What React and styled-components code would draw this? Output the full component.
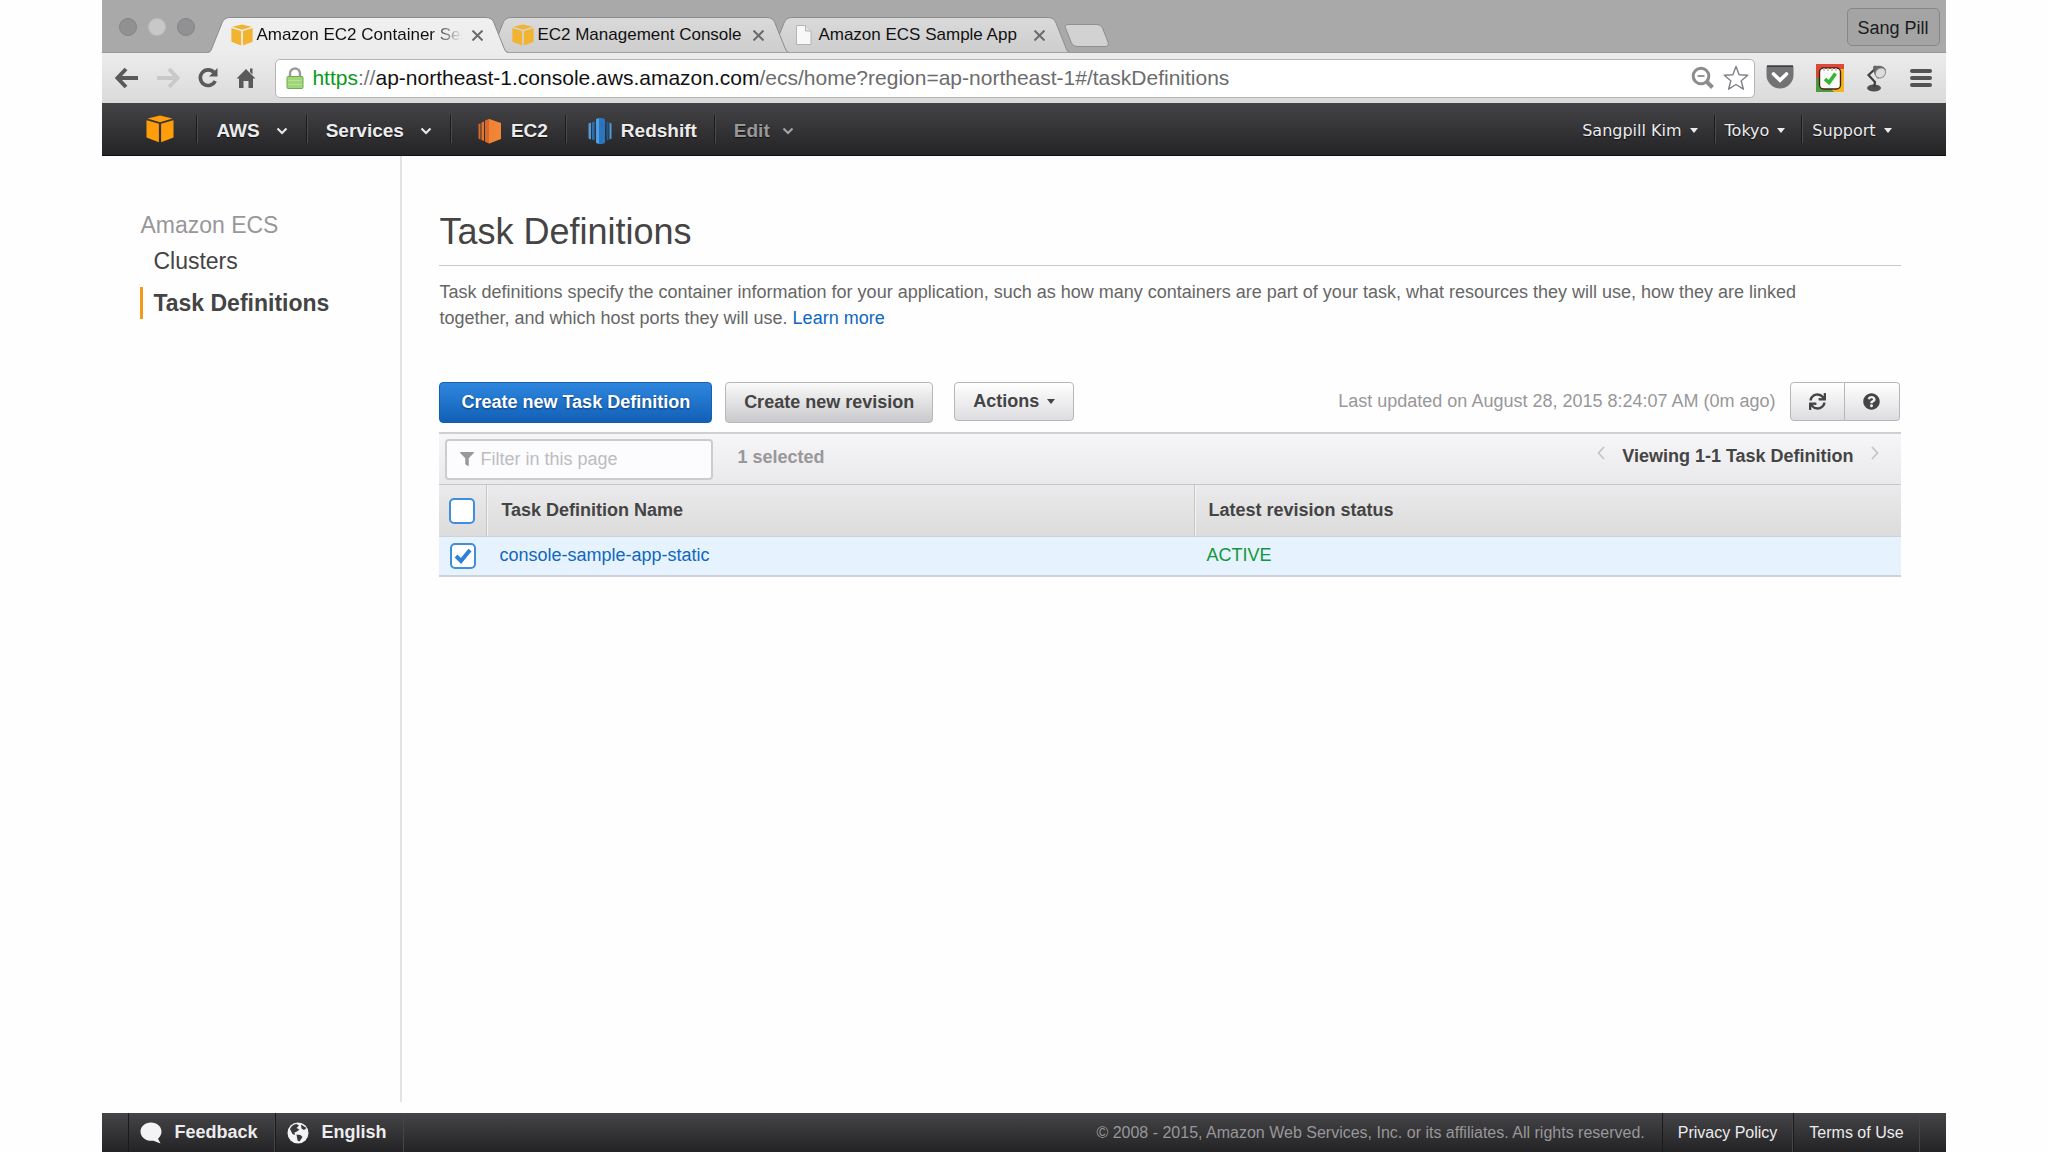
import React, { useState } from 'react';
import styled, { createGlobalStyle } from 'styled-components';
import { FaFilter, FaSync, FaQuestionCircle } from 'react-icons/fa';

const TABS = [
  { title: 'Amazon EC2 Container Ser', icon: 'cube', active: true },
  { title: 'EC2 Management Console', icon: 'cube' },
  { title: 'Amazon ECS Sample App', icon: 'page' },
];

const TASKS = [{ name: 'console-sample-app-static', status: 'ACTIVE' }];

const CubeIcon = ({ size, color }) => (
  <svg width={size} height={size} viewBox='0 0 28 28' fill={color}>
    <path d='M14 0.5 26.5 3.6 14 7.2 1.5 3.6Z' />
    <path d='M0.5 5.2 12.9 8.8V27.3L0.5 22.6Z' />
    <path d='M27.5 5.2 15.1 8.8V27.3L27.5 22.6Z' />
  </svg>
);

const PageIcon = () => (
  <svg width='22' height='22' viewBox='0 0 22 22'>
    <path d='M3.5 1.5H12.5L18 7V20.5H3.5Z' fill='#f8f8f8' stroke='#b4b4b4' />
    <path d='M12.5 1.5V7H18' fill='#e4e4e4' stroke='#b4b4b4' />
  </svg>
);

const CloseIcon = () => (
  <svg width='11' height='11' viewBox='0 0 10 10'>
    <path d='M0.5 0.5 9.5 9.5M9.5 0.5 0.5 9.5' stroke='#6b6b6b' strokeWidth='1.800' />
  </svg>
);

const TabShape = ({ active }) => (
  <svg width='100%' height='36' viewBox='0 0 300 36' preserveAspectRatio='none'>
    <defs>
      <linearGradient id={active ? 'tabOn' : 'tabOff'} x2='0' y2='1'>
        <stop offset='0' stopColor={active ? '#f0f0f0' : '#dadada'} />
        <stop offset='1' stopColor={active ? '#ececec' : '#cdcdcd'} />
      </linearGradient>
    </defs>
    <path
      d='M0 36Q3 35 4 31L14 6Q16 0.5 22 0.5H278Q284 0.5 286 6L296 31Q297 35 300 36Z'
      fill={`url(#${active ? 'tabOn' : 'tabOff'})`}
    />
    <path
      d='M0 35.5Q3 35 4 31L14 6Q16 0.5 22 0.5H278Q284 0.5 286 6L296 31Q297 35 300 35.5'
      fill='none'
      stroke='#8c8c8c'
    />
    {!active && <path d='M0 35.5H300' stroke='#a0a0a0' />}
  </svg>
);

const NewTabShape = () => (
  <svg width='46' height='26' viewBox='0 0 46 26'>
    <path
      d='M4 1.5H33Q37 1.5 38.500 5L44 19Q45.500 23.500 41 23.500H13Q9 23.500 7.500 20L1.500 5Q0.500 1.500 4 1.500Z'
      fill='#d2d2d2'
      stroke='#8e8e8e'
    />
  </svg>
);

const BackIcon = () => (
  <svg width='24' height='22' viewBox='0 0 24 22' fill='none' stroke='#5a5a5a'>
    <path d='M11 2 2.500 11 11 20M3 11H23' strokeWidth='4' />
  </svg>
);

const ForwardIcon = () => (
  <svg width='24' height='22' viewBox='0 0 24 22' fill='none' stroke='#c9c9c9'>
    <path d='M13 2 21.500 11 13 20M21 11H1' strokeWidth='4' />
  </svg>
);

const ReloadIcon = () => (
  <svg width='22' height='22' viewBox='0 0 22 22'>
    <path d='M17 5.500A7.800 7.800 0 1 0 18.200 14' fill='none' stroke='#5a5a5a' strokeWidth='3.600' />
    <path d='M20.500 1V9.500H12Z' fill='#5a5a5a' />
  </svg>
);

const HomeIcon = () => (
  <svg width='20' height='20' viewBox='0 0 20 20' fill='#5a5a5a'>
    <path d='M10 1 19.500 10.500H17V20H12.500V13H7.500V20H3V10.500H0.500Z' />
    <path d='M14 0.500H16.500V6.500L14 4Z' />
  </svg>
);

const LockIcon = () => (
  <svg width='18' height='22' viewBox='0 0 18 22'>
    <path d='M4 11V6.500A5 5 0 0 1 14 6.500V11' fill='none' stroke='#9a9a9a' strokeWidth='2.400' />
    <rect x='1' y='9.500' width='16' height='12' rx='1' fill='#9fd67a' stroke='#6fac4c' />
    <path d='M2 13.500H16M2 17.500H16' stroke='#b4e295' />
  </svg>
);

const ZoomOutIcon = () => (
  <svg width='24' height='24' viewBox='0 0 24 24' fill='none' stroke='#8c8c8f'>
    <circle cx='10' cy='10' r='7.800' strokeWidth='3' />
    <path d='M6.500 10H13.500' strokeWidth='1.800' />
    <path d='M15.500 15.500 21.500 21.500' strokeWidth='4' />
  </svg>
);

const StarIcon = () => (
  <svg width='26' height='26' viewBox='0 0 26 26'>
    <path
      d='M13 1.500 16.200 9.800 24.800 10.300 18.200 15.700 20.400 24.200 13 19.500 5.600 24.200 7.800 15.700 1.200 10.300 9.800 9.800Z'
      fill='#fff'
      stroke='#7f7f86'
      strokeWidth='1.400'
      strokeLinejoin='round'
    />
  </svg>
);

const PocketIcon = () => (
  <svg width='28' height='26' viewBox='0 0 28 26'>
    <path d='M2 0.500H26Q27.500 0.500 27.500 2V10A13.500 13.500 0 0 1 0.500 10V2Q0.500 0.500 2 0.500Z' fill='#737376' />
    <path d='M1 1.200H27' stroke='#3e3e40' strokeWidth='1.600' />
    <path d='M7.500 9 14 15.300 20.500 9' fill='none' stroke='#fff' strokeWidth='3.600' strokeLinecap='round' />
  </svg>
);

const CheckerIcon = () => (
  <svg width='28' height='28' viewBox='0 0 28 28'>
    <path d='M0 0H28V9H0Z' fill='#dd4a3c' />
    <path d='M20 5H28V28H17Z' fill='#f3b51c' />
    <path d='M0 10 3 10 18 28H0Z' fill='#4d9a45' />
    <path d='M0 4H4V14H0Z' fill='#d24a38' />
    <rect x='3.500' y='4' width='21' height='21' rx='4' fill='#f9fbf7' stroke='#4a1f12' strokeWidth='1.400' />
    <path d='M8 4V7M12 4V7M16 4V7M20 4V7' stroke='#bbb' strokeWidth='1.500' />
    <path d='M9 15 13 18.500 19.500 9.500' fill='none' stroke='#33b535' strokeWidth='3.600' />
  </svg>
);

const LampIcon = () => (
  <svg width='22' height='28' viewBox='0 0 22 28'>
    <ellipse cx='8' cy='24' rx='7' ry='3.500' fill='#505050' />
    <path d='M8 23 9 18 2.500 11 9 5' fill='none' stroke='#3e3e3e' strokeWidth='2.200' />
    <path d='M7 3Q8 0.500 11 2Q17 1 20 6L12 15Q7 10 7 3Z' fill='#666' />
    <ellipse cx='14.500' cy='9' rx='5.500' ry='4.600' transform='rotate(-40 14.500 9)' fill='#dcdcdc' stroke='#8d8d8d' />
  </svg>
);

const MenuIcon = () => (
  <svg width='22' height='20' viewBox='0 0 22 20'>
    <path d='M2 3H20M2 10H20M2 17H20' stroke='#535355' strokeWidth='4' strokeLinecap='round' />
  </svg>
);

const Ec2Icon = () => (
  <svg width='24' height='26' viewBox='0 0 24 26'>
    <path d='M11 1 23 5V21L11 25.500Z' fill='#f58536' />
    <path d='M11 1 17 3.500V23L11 25.500Z' fill='#f08434' />
    <path d='M7 2.500 11 1V25.500L7 23.800Z' fill='#d9682a' />
    <path d='M3.500 4.500 6 3.600V22.900L3.500 22Z' fill='#e27631' />
    <path d='M0.500 6 2.500 5.200V21.500L0.500 20.700Z' fill='#d9682a' />
  </svg>
);

const RedshiftIcon = () => (
  <svg width='24' height='28' viewBox='0 0 24 28'>
    <path d='M0.500 6.500 3 5.500V22.500L0.500 21.500Z' fill='#4d9ade' />
    <path d='M4 5.500 6.500 4.500V23.500L4 22.500Z' fill='#2a70b4' />
    <path d='M8 2 11 1V27L8 26Z' fill='#4f9fe0' />
    <path d='M11 1H14L17 2V26L14 27H11Z' fill='#2b74be' />
    <path d='M18.500 4.500 20.500 5V23L18.500 23.500Z' fill='#21598f' />
    <path d='M21.500 5.500 23.500 6.500V21.500L21.500 22.500Z' fill='#4d9ade' />
  </svg>
);

const ChevronIcon = ({ color }) => (
  <svg width='12' height='8' viewBox='0 0 12 8'>
    <path d='M1.500 1.500 6 6 10.500 1.500' fill='none' stroke={color} strokeWidth='2.200' />
  </svg>
);

const SmallCaret = () => (
  <svg width='8' height='5' viewBox='0 0 8 5'>
    <path d='M0 0H8L4 5Z' fill='currentColor' />
  </svg>
);

const BubbleIcon = () => (
  <svg width='22' height='22' viewBox='0 0 22 22'>
    <path d='M11 0.500C17 0.500 21.500 4.500 21.500 9.500C21.500 12.500 20 15 18 16.700L20.500 21.500L13.500 18.800C5.500 19.500 0.500 15 0.500 9.500C0.500 4.500 5 0.500 11 0.500Z' fill='#f3f3f5' />
  </svg>
);

const GlobeIcon = () => (
  <svg width='22' height='22' viewBox='0 0 22 22'>
    <circle cx='11' cy='11' r='10.500' fill='#f3f3f5' />
    <path d='M3 7Q5 2.500 9.500 2L12 3.500 9.500 6 12.500 7.500 10 9.500 7.500 10.500 8 13 5.500 12Z' fill='#39383a' />
    <path d='M14 2.500 19.500 6 17 8 14.500 6.500Z' fill='#39383a' />
    <path d='M9.500 12.500 13.500 13 15.500 15 12.500 19.500 10.500 18.500Z' fill='#39383a' />
  </svg>
);

const PageArrow = ({ back }) => (
  <svg width='8' height='14' viewBox='0 0 8 14'>
    <path
      d={back ? 'M7 1 1.500 7 7 13' : 'M1 1 6.500 7 1 13'}
      fill='none'
      stroke='#c2c1c4'
      strokeWidth='1.600'
    />
  </svg>
);

const BrowserBar = () => (
  <header>
    <TitleBar>
      <Lights>
        <Light />
        <Light $pale />
        <Light />
      </Lights>
      <TabStrip>
        {TABS.map((tab, i) => (
          <Tab key={tab.title} $order={TABS.length - i}>
            <TabBackdrop>
              <TabShape active={tab.active} />
            </TabBackdrop>
            {tab.icon === 'cube' ? <CubeIcon size={22} color='#f2b330' /> : <PageIcon />}
            <TabTitle $fade={tab.active}>{tab.title}</TabTitle>
            <PlainButton aria-label='Close tab'>
              <CloseIcon />
            </PlainButton>
          </Tab>
        ))}
        <NewTab aria-label='New tab'>
          <NewTabShape />
        </NewTab>
      </TabStrip>
      <Profile>Sang Pill</Profile>
    </TitleBar>
    <Toolbar>
      <NavButtons>
        <PlainButton aria-label='Back'>
          <BackIcon />
        </PlainButton>
        <PlainButton aria-label='Forward'>
          <ForwardIcon />
        </PlainButton>
        <PlainButton aria-label='Reload'>
          <ReloadIcon />
        </PlainButton>
        <PlainButton aria-label='Home'>
          <HomeIcon />
        </PlainButton>
      </NavButtons>
      <AddressBar>
        <LockIcon />
        <Url role='textbox' aria-label='Address'>
          <UrlPart $color='#0a9a1e'>https</UrlPart>
          <UrlPart $color='#777'>://</UrlPart>
          <UrlPart $color='#111'>ap-northeast-1.console.aws.amazon.com</UrlPart>
          <UrlPart $color='#6c6c6c'>/ecs/home?region=ap-northeast-1#/taskDefinitions</UrlPart>
        </Url>
        <PlainButton aria-label='Zoom'>
          <ZoomOutIcon />
        </PlainButton>
        <PlainButton aria-label='Bookmark'>
          <StarIcon />
        </PlainButton>
      </AddressBar>
      <Extensions>
        <PlainButton aria-label='Pocket'>
          <PocketIcon />
        </PlainButton>
        <PlainButton aria-label='Checker'>
          <CheckerIcon />
        </PlainButton>
        <PlainButton aria-label='Lamp'>
          <LampIcon />
        </PlainButton>
        <PlainButton aria-label='Menu'>
          <MenuIcon />
        </PlainButton>
      </Extensions>
    </Toolbar>
  </header>
);

const ConsoleNav = () => (
  <NavBar>
    <NavGroup>
      <NavLogo href='#' aria-label='Home'>
        <CubeIcon size={28} color='#ff9d0b' />
      </NavLogo>
      <NavItem>
        AWS <ChevronIcon color='#e6e6e8' />
      </NavItem>
      <NavItem>
        Services <ChevronIcon color='#e6e6e8' />
      </NavItem>
      <ShortcutItem $first>
        <Ec2Icon /> EC2
      </ShortcutItem>
      <ShortcutItem>
        <RedshiftIcon /> Redshift
      </ShortcutItem>
      <NavItem $muted>
        Edit <ChevronIcon color='#a3a3a6' />
      </NavItem>
    </NavGroup>
    <NavGroup>
      {['Sangpill Kim', 'Tokyo', 'Support'].map((label) => (
        <AccountItem key={label}>
          {label} <SmallCaret />
        </AccountItem>
      ))}
    </NavGroup>
  </NavBar>
);

const TaskTable = () => {
  const [selected, setSelected] = useState([TASKS[0].name]);
  const toggle = (name) =>
    setSelected(selected.includes(name) ? selected.filter((n) => n !== name) : [...selected, name]);
  return (
    <>
      <FilterBar>
        <FilterLabel>
          <FaFilter />
          <FilterInput placeholder='Filter in this page' aria-label='Filter in this page' />
        </FilterLabel>
        <SelectedCount>{selected.length} selected</SelectedCount>
        <Pager>
          <PlainButton aria-label='Previous page'>
            <PageArrow back />
          </PlainButton>
          <PagerText>Viewing 1-1 Task Definition</PagerText>
          <PlainButton aria-label='Next page'>
            <PageArrow />
          </PlainButton>
        </Pager>
      </FilterBar>
      <Table>
        <thead>
          <tr>
            <Th $check>
              <Checkbox aria-label='Select all' />
            </Th>
            <Th>Task Definition Name</Th>
            <Th>Latest revision status</Th>
          </tr>
        </thead>
        <tbody>
          {TASKS.map(({ name, status }) => (
            <tr key={name}>
              <Td $check>
                <Checkbox
                  aria-label={name}
                  checked={selected.includes(name)}
                  onChange={() => toggle(name)}
                />
              </Td>
              <Td>
                <Link href='#'>{name}</Link>
              </Td>
              <Td>
                <Status>{status}</Status>
              </Td>
            </tr>
          ))}
        </tbody>
      </Table>
    </>
  );
};

export default function App() {
  return (
    <>
      <GlobalStyle />
      <Window>
        <BrowserBar />
        <ConsoleNav />
        <Body>
          <Sidebar>
            <SideTitle>Amazon ECS</SideTitle>
            <SideLink href='#'>Clusters</SideLink>
            <SideLink href='#' $active>
              Task Definitions
            </SideLink>
          </Sidebar>
          <Main>
            <Heading>Task Definitions</Heading>
            <Intro>
              Task definitions specify the container information for your application, such as how many
              containers are part of your task, what resources they will use, how they are linked together,
              and which host ports they will use. <Link href='#'>Learn more</Link>
            </Intro>
            <Actions>
              <Button $primary>Create new Task Definition</Button>
              <Button $shaded>Create new revision</Button>
              <MenuButton>
                Actions <SmallCaret />
              </MenuButton>
              <Updated>Last updated on August 28, 2015 8:24:07 AM (0m ago)</Updated>
              <ButtonPair>
                <IconButton aria-label='Refresh'>
                  <FaSync />
                </IconButton>
                <IconButton aria-label='Help'>
                  <FaQuestionCircle />
                </IconButton>
              </ButtonPair>
            </Actions>
            <TaskTable />
          </Main>
        </Body>
        <Footer>
          <FooterItem>
            <BubbleIcon /> Feedback
          </FooterItem>
          <FooterItem>
            <GlobeIcon /> English
          </FooterItem>
          <Copyright>
            © 2008 - 2015, Amazon Web Services, Inc. or its affiliates. All rights reserved.
          </Copyright>
          <FooterLink href='#'>Privacy Policy</FooterLink>
          <FooterLink href='#'>Terms of Use</FooterLink>
        </Footer>
      </Window>
    </>
  );
}

const GlobalStyle = createGlobalStyle`
  * {
    box-sizing: border-box;
  }
  body {
    margin: 0;
    background: #fefefe;
    color: #444;
    font-family: 'Liberation Sans', Arial, sans-serif;
    font-size: 18px;
  }
  button, input {
    font: inherit;
    color: inherit;
  }
  svg {
    display: block;
    flex: none;
  }
`;

const Window = styled.div`
  display: flex;
  flex-direction: column;
  width: 90%;
  min-height: 100vh;
  margin: 0 auto;
`;

const PlainButton = styled.button`
  display: flex;
  padding: 0;
  border: 0;
  background: none;
`;

const TitleBar = styled.div`
  display: flex;
  align-items: flex-end;
  height: 53px;
  background: #a9a9a9;
  border-bottom: 1px solid #979797;
`;

const Lights = styled.div`
  display: flex;
  align-self: center;
  gap: 11px;
  width: 106px;
  padding: 2px 0 0 17px;
`;

const Light = styled.span`
  width: 18px;
  height: 18px;
  border: 1px solid ${({ $pale }) => ($pale ? '#bcbcbc' : '#848486')};
  border-radius: 50%;
  background: ${({ $pale }) => ($pale ? '#c8c8c8' : '#919193')};
`;

const TabStrip = styled.div`
  display: flex;
  flex: 1;
  align-items: flex-end;
  margin-bottom: -1px;
`;

const Tab = styled.div`
  position: relative;
  z-index: ${({ $order }) => $order};
  display: flex;
  align-items: center;
  gap: 3px;
  width: 300px;
  height: 36px;
  margin-right: -19px;
  padding: 0 25px 0 23px;
`;

const TabBackdrop = styled.div`
  position: absolute;
  inset: 0;
  z-index: -1;
`;

const TabTitle = styled.span`
  flex: 1;
  overflow: hidden;
  color: #111;
  font-size: 17px;
  white-space: nowrap;
  ${({ $fade }) => $fade && 'mask-image: linear-gradient(90deg, #000 82%, transparent 97%);'}
`;

const NewTab = styled(PlainButton)`
  margin: 0 0 4px 13px;
`;

const Profile = styled.button`
  height: 38px;
  margin: 0 6px 6px 0;
  padding: 3px 10px 0;
  border: 1px solid #868686;
  border-radius: 5px;
  background: #a4a4a4;
  color: #1b1b1b;
`;

const Toolbar = styled.div`
  display: flex;
  align-items: center;
  height: 50px;
  background: linear-gradient(#ececec, #dadada);
`;

const NavButtons = styled.div`
  display: flex;
  align-items: center;
  gap: 17px;
  width: 173px;
  padding-left: 13px;
`;

const AddressBar = styled.div`
  display: flex;
  flex: 1;
  align-items: center;
  gap: 8px;
  height: 39px;
  padding: 0 5px 0 10px;
  border: 1px solid #b5b5b5;
  border-radius: 5px;
  background: #fff;
`;

const Url = styled.div`
  flex: 1;
  overflow: hidden;
  font-size: 21px;
  white-space: nowrap;
`;

const UrlPart = styled.span`
  color: ${({ $color }) => $color};
`;

const Extensions = styled.div`
  display: flex;
  align-items: center;
  gap: 22px;
  padding: 0 14px 0 11px;
`;

const NavBar = styled.nav`
  display: flex;
  justify-content: space-between;
  height: 53px;
  padding: 0 38px 0 44px;
  background: linear-gradient(#444345, #242325);
  border-bottom: 1px solid #111;
`;

const NavGroup = styled.div`
  display: flex;
  align-items: center;
`;

const NavLogo = styled.a`
  padding-right: 22px;
`;

const NavItem = styled.button`
  display: flex;
  align-items: center;
  gap: ${({ $muted }) => ($muted ? '12px' : '16px')};
  height: 28px;
  padding: 3px 18px 0 19px;
  border: 0;
  border-left: 1px solid #1c1c1d;
  box-shadow: inset 1px 0 #4a494b;
  background: none;
  color: ${({ $muted }) => ($muted ? '#98979a' : '#ececee')};
  font-size: 19px;
  font-weight: bold;
  text-shadow: 0 1px 1px #111;
`;

const ShortcutItem = styled(NavItem)`
  gap: 9px;
  padding: 3px 17px 0 ${({ $first }) => ($first ? '27px' : '22px')};
`;

const AccountItem = styled(NavItem)`
  gap: 8px;
  padding: 3px 16px 0 10px;
  color: #ececee;
  font-family: 'DejaVu Sans', Verdana, sans-serif;
  font-size: 16px;
  font-weight: normal;
  &:first-child {
    border-left: 0;
    box-shadow: none;
  }
`;

const Body = styled.div`
  display: flex;
  flex: 1;
  padding-bottom: 11px;
`;

const Sidebar = styled.aside`
  width: 300px;
  padding: 55px 0 0 38px;
  border-right: 2px solid #e3e2e4;
  font-size: 23px;
  line-height: 28px;
`;

const SideTitle = styled.div`
  color: #98979a;
`;

const SideLink = styled.a`
  display: block;
  width: fit-content;
  margin: 8px 0 12px;
  padding-left: 13px;
  color: #444;
  text-decoration: none;
  ${({ $active }) =>
    $active &&
    `
    margin: 0;
    padding: 2px 0 2px 10px;
    border-left: 3px solid #f39a1c;
    font-weight: bold;
  `}
`;

const Main = styled.main`
  flex: 1;
  padding: 53px 45px 0 37px;
`;

const Heading = styled.h1`
  margin: 0;
  padding-bottom: 10px;
  border-bottom: 1px solid #c9c8ca;
  font-size: 36px;
  font-weight: normal;
  line-height: 46px;
`;

const Intro = styled.p`
  margin: 13px 0 51px;
  padding-right: 40px;
  color: #666;
  line-height: 26px;
`;

const Link = styled.a`
  color: #0f67be;
  text-decoration: none;
`;

const Actions = styled.div`
  display: flex;
  align-items: flex-start;
  margin-bottom: 9px;
`;

const Button = styled.button`
  height: ${({ $primary, $shaded }) => ($primary || $shaded ? '41px' : '39px')};
  margin-right: 13px;
  padding: 0 ${({ $primary }) => ($primary ? '21px' : '18px')};
  border: 1px solid ${({ $primary }) => ($primary ? '#1560ac' : '#b7b6b9')};
  border-radius: 4px;
  background: ${({ $primary, $shaded }) =>
    $primary
      ? 'linear-gradient(#2f86de, #1160b6)'
      : $shaded
        ? 'linear-gradient(#fafafa, #c9c8cb)'
        : 'linear-gradient(#fff, #dddce0)'};
  color: ${({ $primary }) => ($primary ? '#fff' : '#444')};
  font-weight: bold;
  ${({ $primary }) => $primary && 'text-shadow: 0 1px 2px #0a3d78;'}
`;

const MenuButton = styled(Button)`
  display: flex;
  align-items: center;
  gap: 8px;
  margin-left: 8px;
`;

const Updated = styled.span`
  margin: 0 14px 0 auto;
  color: #98979a;
  line-height: 39px;
`;

const ButtonPair = styled.div`
  display: flex;
  margin-right: 1px;
`;

const IconButton = styled(Button)`
  display: grid;
  place-items: center;
  width: 55px;
  margin: 0;
  padding: 0;
  border-radius: 4px 0 0 4px;
  svg {
    font-size: 17px;
  }
  & + & {
    border-left: 0;
    border-radius: 0 4px 4px 0;
  }
`;

const FilterBar = styled.div`
  display: flex;
  align-items: center;
  height: 53px;
  padding: 0 22px 0 6px;
  border-top: 2px solid #cfced1;
  border-bottom: 1px solid #c6c5c8;
  background: linear-gradient(#f6f5f7, #e9e8ea);
`;

const FilterLabel = styled.label`
  display: flex;
  align-items: center;
  gap: 6px;
  width: 268px;
  height: 41px;
  padding: 0 13px;
  border: 2px solid #cccbce;
  border-radius: 4px;
  background: #fcfbfd;
  color: #98979a;
  svg {
    font-size: 14px;
  }
`;

const FilterInput = styled.input`
  flex: 1;
  min-width: 0;
  padding: 0;
  border: 0;
  outline: 0;
  background: none;
  &::placeholder {
    color: #bdbcbf;
  }
`;

const SelectedCount = styled.span`
  margin-left: 24px;
  padding-bottom: 4px;
  color: #98979a;
  font-weight: bold;
`;

const Pager = styled.div`
  display: flex;
  align-items: flex-start;
  gap: 17px;
  margin-left: auto;
  padding-bottom: 5px;
`;

const PagerText = styled.span`
  font-weight: bold;
`;

const Table = styled.table`
  width: 100%;
  border-spacing: 0;
  table-layout: fixed;
`;

const Th = styled.th`
  ${({ $check }) => $check && 'width: 47px;'}
  height: 52px;
  padding: ${({ $check }) => ($check ? '0 0 0 10px' : '0 0 0 14px')};
  border-bottom: 1px solid #cfd2d6;
  background: linear-gradient(#ebeaec, #dcdcdc);
  text-align: left;
  & + & {
    border-left: 1px solid #c6c5c8;
    box-shadow: inset 1px 0 #f4f3f5;
  }
`;

const Td = styled.td`
  height: 40px;
  padding: ${({ $check }) => ($check ? '0 0 0 11px' : '0 0 2px 13px')};
  border-bottom: 2px solid #cdd2da;
  background: #e7f2ff;
`;

const Checkbox = styled.input.attrs({ type: 'checkbox' })`
  display: block;
  width: 26px;
  height: 26px;
  margin: 0;
  border: 2px solid #3f8ddc;
  border-radius: 5px;
  background: #fff;
  appearance: none;
  &:checked {
    background: #fff
      url("data:image/svg+xml,%3Csvg xmlns='http://www.w3.org/2000/svg' viewBox='0 0 22 22'%3E%3Cpath d='M4 11 9 16 18 5' fill='none' stroke='%232f80d8' stroke-width='4'/%3E%3C/svg%3E")
      center / contain no-repeat;
  }
`;

const Status = styled.span`
  color: #10983a;
`;

const Footer = styled.footer`
  display: flex;
  align-items: stretch;
  height: 39px;
  padding: 0 26px;
  background: linear-gradient(#454446, #232224);
`;

const FooterItem = styled.button`
  display: flex;
  align-items: center;
  gap: 12px;
  padding: 0 17px 0 11px;
  border: 0;
  border-left: 1px solid #1a191b;
  border-right: 1px solid #454446;
  background: none;
  color: #ececee;
  font-weight: bold;
`;

const Copyright = styled.span`
  margin: 0 17px 0 auto;
  color: #98979a;
  font-size: 16px;
  line-height: 39px;
`;

const FooterLink = styled.a`
  padding: 0 15px;
  border-left: 1px solid #1a191b;
  border-right: 1px solid #454446;
  color: #ececee;
  font-size: 16px;
  line-height: 39px;
  text-decoration: none;
`;
